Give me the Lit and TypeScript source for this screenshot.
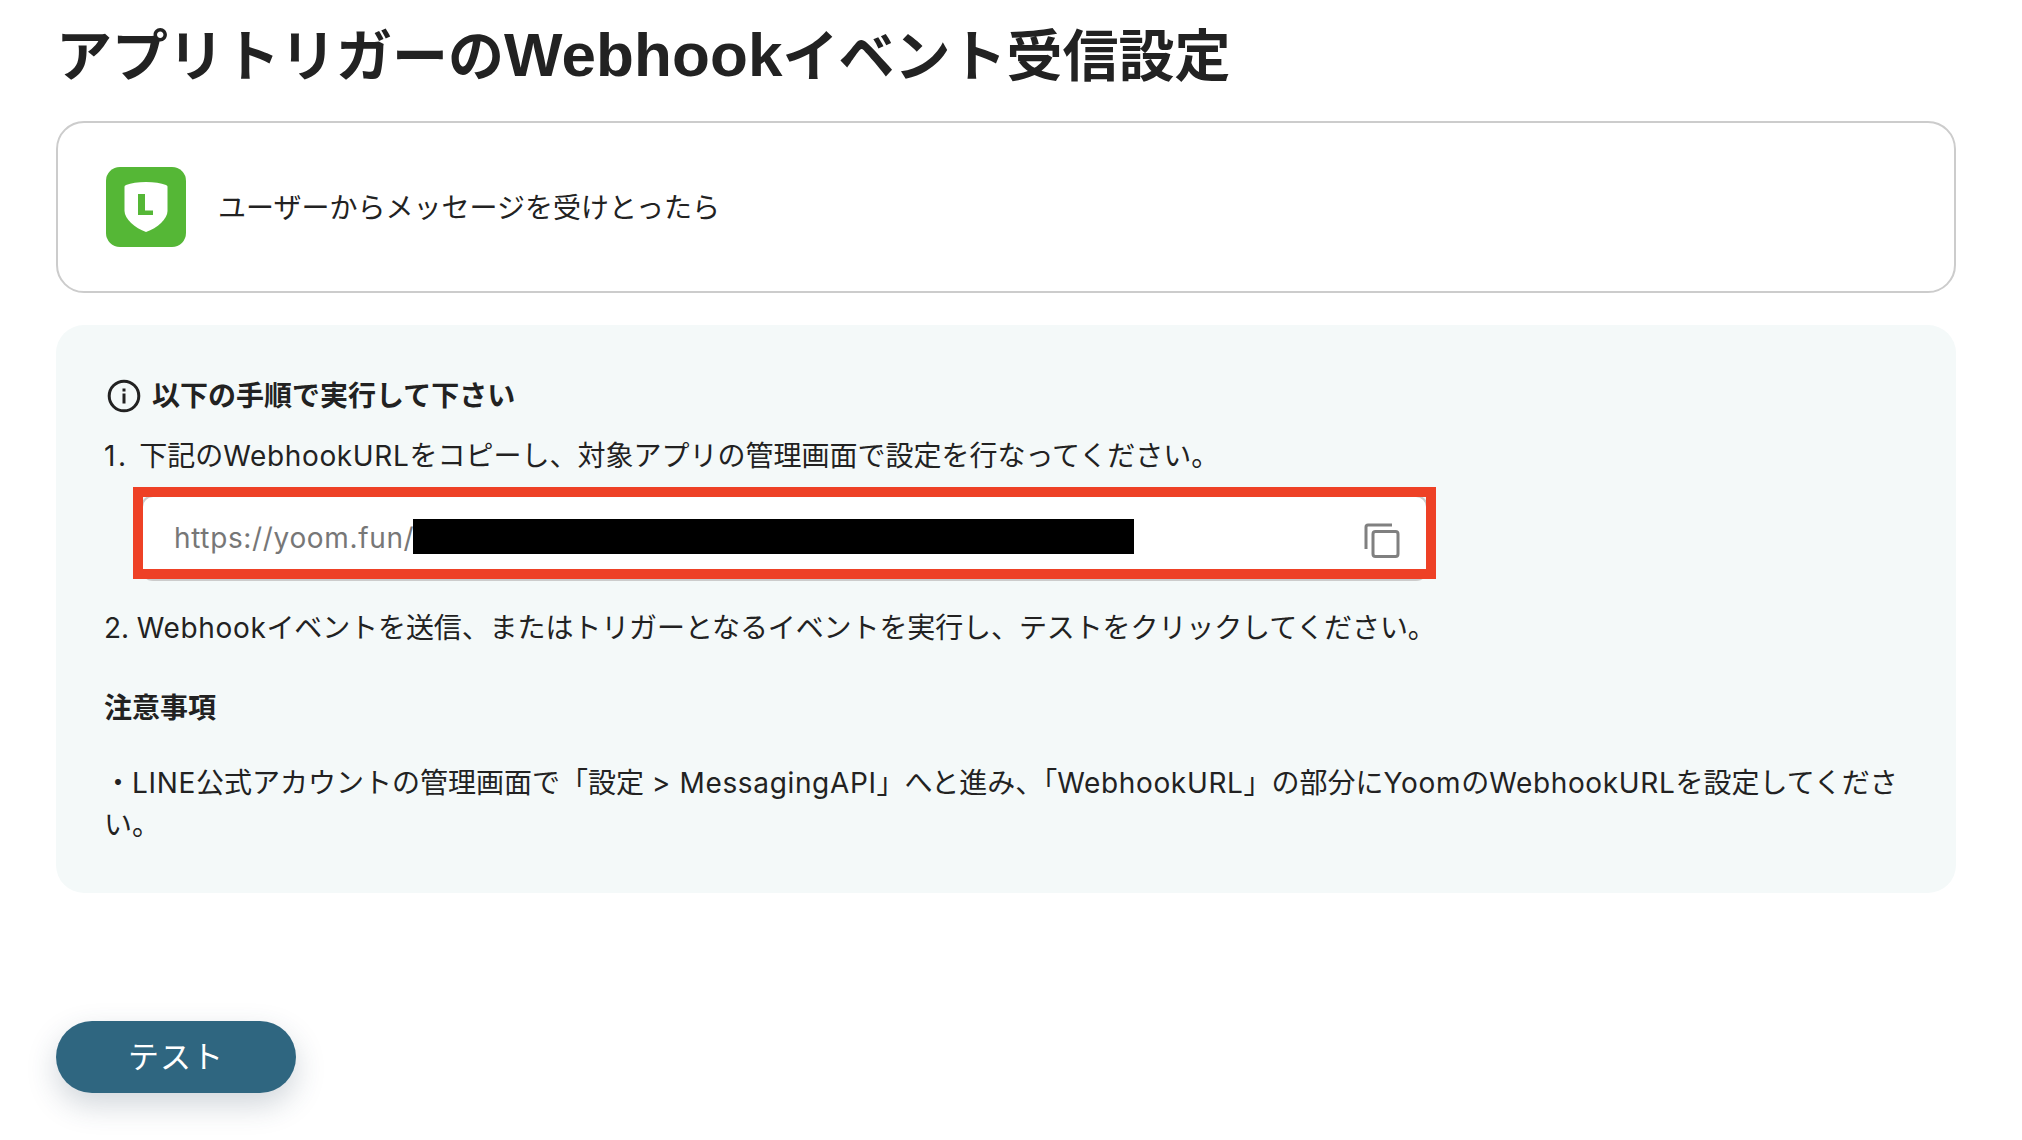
import { LitElement, html, css } from "lit";
import { customElement } from "lit/decorators.js";

@customElement("app-root")
export class AppRoot extends LitElement {
  static styles = css`
    :host {
      display: block;
      width: 2022px;
      height: 1140px;
      overflow: hidden;
      background: #fff;
      box-sizing: border-box;
      padding: 0 66px 0 56px;
      color: #222;
      font-family: Inter, "Noto Sans CJK JP", sans-serif;
      font-size: 28px;
    }
    h1 {
      margin: 0;
      height: 121px;
      padding-top: 18px;
      box-sizing: border-box;
      font-family: "Liberation Sans", "Noto Sans CJK JP", sans-serif;
      font-size: 56px;
      line-height: 74px;
      font-weight: 700;
      white-space: nowrap;
    }
    .latin { font-size: 62px; letter-spacing: 0.1px; }
    .en { letter-spacing: 0.65px; }
    .num { letter-spacing: 2.6px; }
    .card {
      height: 172px;
      box-sizing: border-box;
      border: 2px solid #ccc;
      border-radius: 28px;
      display: flex;
      align-items: center;
      gap: 32px;
      padding-left: 48px;
    }
    .card span { padding-bottom: 2px; }
    .logo { width: 80px; height: 80px; flex: none; display: block; }
    .panel {
      margin-top: 32px;
      height: 568px;
      box-sizing: border-box;
      background: #f4f9f9;
      border-radius: 28px;
      padding: 50px 50px 0 48px;
      line-height: 42px;
    }
    .head {
      display: flex;
      align-items: center;
      gap: 11px;
      height: 42px;
      font-weight: 700;
      padding-left: 3px;
    }
    .head svg { width: 34px; height: 34px; flex: none; }
    .line { margin: 0; white-space: nowrap; }
    .first { margin-top: 18px; }
    .field {
      position: relative;
      margin: 18px 0 0 37px;
      width: 1287px;
      height: 86px;
      box-sizing: border-box;
      border: 2px solid #ccc;
      border-radius: 12px;
      background: #fff;
      display: flex;
      align-items: center;
      justify-content: space-between;
      padding: 0 26px 0 31px;
    }
    .url { color: #777; }
    .mask {
      position: absolute;
      left: 270px;
      top: 22px;
      width: 721px;
      height: 35px;
      background: #000;
    }
    .highlight {
      position: absolute;
      left: -10px;
      top: -10px;
      width: 1303px;
      height: 92px;
      box-sizing: border-box;
      border: 10px solid #ee4126;
    }
    .copy { width: 36px; height: 36px; position: relative; top: 2px; }
    .second { margin-top: 26px; letter-spacing: -0.1px; }
    .note { margin: 38px 0 0; font-weight: 700; line-height: 42px; }
    .para { margin: 33px 0 0; }
    .btn {
      display: block;
      padding: 0 0 6px;
      margin-top: 128px;
      width: 240px;
      height: 72px;
      border: 0;
      border-radius: 36px;
      background: #2f6680;
      color: #fff;
      font: inherit;
      font-size: 31px;
      letter-spacing: 1px;
      box-shadow: 0 12px 30px rgba(47, 70, 90, 0.22);
    }
  `;

  render() {
    return html`
      <h1>アプリトリガーの<span class="latin">Webhook</span>イベント受信設定</h1>
      <div class="card">
        <svg class="logo" viewBox="0 0 80 80">
          <rect width="80" height="80" rx="14" fill="#55b736" />
          <path d="M40 15c8 0 15 1 20 3c1 .5 1.500 1 1.500 2V44c0 8-10 17-21.500 21C29 61 18.500 52 18.500 44V20c0-1 .5-1.500 1.500-2c5-2 12-3 20-3Z" fill="#fff" />
          <path d="M32 27h7v16.500h8v4.500h-15Z" fill="#55b736" />
        </svg>
        <span>ユーザーからメッセージを受けとったら</span>
      </div>
      <div class="panel">
        <div class="head">
          <svg viewBox="0 0 34 34" fill="none">
            <circle cx="17" cy="17" r="14.800" stroke="#222" stroke-width="3" />
            <rect x="15.500" y="14.500" width="3" height="10" fill="#222" />
            <rect x="15.500" y="9.500" width="3" height="3" fill="#222" />
          </svg>
          <span>以下の手順で実行して下さい</span>
        </div>
        <p class="line first"><span class="num">1. </span>下記の<span class="en">WebhookURL</span>をコピーし、対象アプリの管理画面で設定を行なってください。</p>
        <div class="field">
          <span class="url en">https://yoom.fun/</span>
          <svg class="copy" viewBox="0 0 36 36" fill="none" stroke="#808080" stroke-width="3">
            <path d="M2 27V5a2 2 0 0 1 2-2H28" />
            <rect x="9" y="9.500" width="25" height="25" rx="2.500" />
          </svg>
          <div class="mask"></div>
          <div class="highlight"></div>
        </div>
        <p class="line second">2. <span class="en">Webhook</span>イベントを送信、またはトリガーとなるイベントを実行し、テストをクリックしてください。</p>
        <p class="note">注意事項</p>
        <p class="para">・<span class="en">LINE</span>公式アカウントの管理画面で「設定 <span class="en">&gt; MessagingAPI</span>」へと進み、「<span class="en">WebhookURL</span>」の部分に<span class="en">Yoom</span>の<span class="en">WebhookURL</span>を設定してください。</p>
      </div>
      <button class="btn">テスト</button>
    `;
  }
}
